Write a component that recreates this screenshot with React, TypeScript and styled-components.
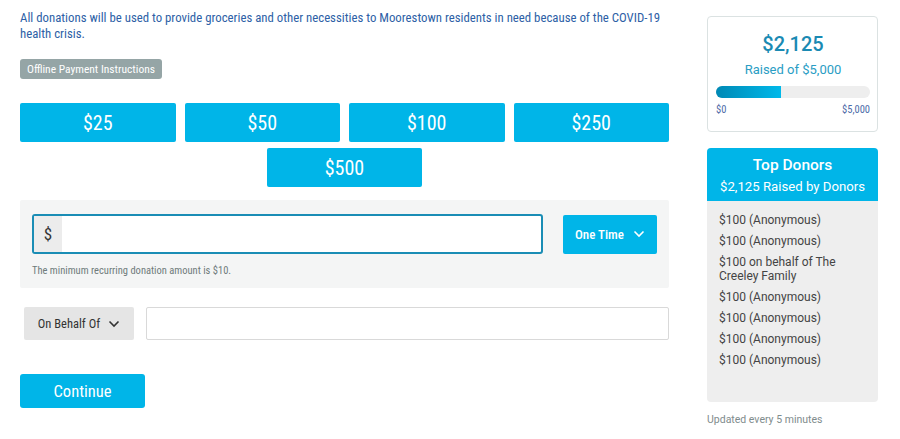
import styled, { createGlobalStyle } from "styled-components";

const GlobalStyle = createGlobalStyle`
  body {
    margin: 0;
    background: #ffffff;
    font-family: Roboto, "Noto Sans", sans-serif;
  }
  * { box-sizing: border-box; }
`;

const condensed = `"Roboto Condensed", "Liberation Sans Narrow", Roboto, sans-serif`;

const amounts = ["$25", "$50", "$100", "$250", "$500"];
const donors = [
  "$100 (Anonymous)",
  "$100 (Anonymous)",
  "$100 on behalf of The Creeley Family",
  "$100 (Anonymous)",
  "$100 (Anonymous)",
  "$100 (Anonymous)",
  "$100 (Anonymous)",
];

function Chevron({ color }: { color: string }) {
  return (
    <svg width="12" height="8" viewBox="0 0 12 8">
      <path d="M1.5 1.5 L6 6 L10.5 1.5" fill="none" stroke={color} strokeWidth="1.6" />
    </svg>
  );
}

export default function App() {
  const raised = 2125;
  const goal = 5000;

  return (
    <>
      <GlobalStyle />
      <Page>
        <Main>
          <Description>
            All donations will be used to provide groceries and other necessities to Moorestown
            residents in need because of the COVID-19 health crisis.
          </Description>
          <Badge>Offline Payment Instructions</Badge>
          <AmountGrid>
            {amounts.map((a) => (
              <AmountButton key={a}>{a}</AmountButton>
            ))}
          </AmountGrid>
          <CustomPanel>
            <CustomRow>
              <AmountInput>
                <Prefix>$</Prefix>
                <Field />
              </AmountInput>
              <FrequencyButton>
                One Time <Chevron color="#ffffff" />
              </FrequencyButton>
            </CustomRow>
            <Hint>The minimum recurring donation amount is $10.</Hint>
          </CustomPanel>
          <BehalfRow>
            <BehalfSelect>
              On Behalf Of <Chevron color="#333333" />
            </BehalfSelect>
            <BehalfInput />
          </BehalfRow>
          <ContinueButton>Continue</ContinueButton>
        </Main>

        <Side>
          <GoalCard>
            <Raised>$2,125</Raised>
            <RaisedOf>Raised of $5,000</RaisedOf>
            <Track>
              <Fill style={{ width: `${(raised / goal) * 100}%` }} />
            </Track>
            <TrackLabels>
              <span>$0</span>
              <span>$5,000</span>
            </TrackLabels>
          </GoalCard>

          <DonorsCard>
            <DonorsHeader>
              <h3>Top Donors</h3>
              <p>$2,125 Raised by Donors</p>
            </DonorsHeader>
            <DonorList>
              {donors.map((d, i) => (
                <li key={i}>{d}</li>
              ))}
            </DonorList>
          </DonorsCard>
          <Updated>Updated every 5 minutes</Updated>
        </Side>
      </Page>
    </>
  );
}

const Page = styled.div`
  display: flex;
  gap: 38px;
  padding: 10px 22px 0 20px;
  width: 900px;
`;

const Main = styled.div`
  width: 649px;
  font-family: ${condensed};
`;

const Description = styled.p`
  margin: 0;
  font-size: 12.8px;
  line-height: 16px;
  color: #2e5fa6;
`;

const Badge = styled.div`
  display: inline-block;
  margin-top: 17px;
  padding: 0 7px;
  height: 20px;
  line-height: 20px;
  border-radius: 3px;
  background: #95a5a6;
  color: #ffffff;
  font-size: 11.5px;
`;

const AmountGrid = styled.div`
  display: flex;
  flex-wrap: wrap;
  justify-content: center;
  gap: 6px 9px;
  margin-top: 24px;
`;

const AmountButton = styled.button`
  flex: 0 0 calc((100% - 27px) / 4);
  height: 39px;
  border: none;
  border-radius: 2px;
  background: #00b5e8;
  color: #ffffff;
  font-family: ${condensed};
  font-size: 20px;
  font-weight: 400;
`;

const CustomPanel = styled.div`
  margin-top: 13px;
  background: #f4f5f5;
  padding: 14px 12px 11px 12px;
  border-radius: 2px;
`;

const CustomRow = styled.div`
  display: flex;
  align-items: center;
  gap: 20px;
`;

const AmountInput = styled.div`
  flex: 1;
  display: flex;
  height: 40px;
  border: 2px solid #1a8db5;
  border-radius: 3px;
  background: #ffffff;
  overflow: hidden;
`;

const Prefix = styled.span`
  width: 28px;
  display: flex;
  align-items: center;
  justify-content: center;
  background: #ececec;
  color: #333333;
  font-size: 17px;
`;

const Field = styled.div`
  flex: 1;
`;

const FrequencyButton = styled.button`
  width: 94px;
  height: 39px;
  display: flex;
  align-items: center;
  justify-content: center;
  gap: 9px;
  border: none;
  border-radius: 2px;
  background: #00b5e8;
  color: #ffffff;
  font-family: ${condensed};
  font-size: 13px;
  font-weight: 500;
`;

const Hint = styled.div`
  margin-top: 10px;
  font-size: 10.5px;
  color: #6f7b7b;
`;

const BehalfRow = styled.div`
  display: flex;
  gap: 12px;
  margin-top: 19px;
  padding-left: 4px;
`;

const BehalfSelect = styled.div`
  width: 110px;
  height: 33px;
  display: flex;
  align-items: center;
  justify-content: center;
  gap: 8px;
  background: #e5e5e5;
  border-radius: 2px;
  color: #333333;
  font-size: 12.5px;
`;

const BehalfInput = styled.div`
  flex: 1;
  height: 33px;
  border: 1px solid #d9d9d9;
  border-radius: 2px;
`;

const ContinueButton = styled.button`
  margin-top: 34px;
  width: 125px;
  height: 34px;
  border: none;
  border-radius: 3px;
  background: #00b5e8;
  color: #ffffff;
  font-family: ${condensed};
  font-size: 16.5px;
  font-weight: 400;
`;

const Side = styled.div`
  width: 171px;
  padding-top: 6px;
`;

const GoalCard = styled.div`
  border: 1px solid #dbe2e2;
  border-radius: 4px;
  padding: 14px 7px 15px 8px;
  text-align: center;
`;

const Raised = styled.div`
  font-size: 20px;
  font-weight: 500;
  color: #1a8ab3;
  line-height: 26px;
`;

const RaisedOf = styled.div`
  margin-top: 5px;
  font-size: 13px;
  color: #2a9dc4;
  line-height: 16px;
`;

const Track = styled.div`
  margin-top: 8px;
  height: 12px;
  border-radius: 6px;
  background: #eeeeee;
  overflow: hidden;
`;

const Fill = styled.div`
  height: 100%;
  background: linear-gradient(to right, #0089b5, #00b9ea);
`;

const TrackLabels = styled.div`
  display: flex;
  justify-content: space-between;
  margin-top: 5px;
  font-family: ${condensed};
  font-size: 10.5px;
  color: #4d6ba8;
`;

const DonorsCard = styled.div`
  margin-top: 16px;
  border-radius: 4px;
  overflow: hidden;
  background: #eeeeee;
  height: 254px;
`;

const DonorsHeader = styled.div`
  background: #00b5e8;
  color: #ffffff;
  text-align: center;
  padding: 7px 0 5px 0;

  h3 {
    margin: 0;
    font-size: 15.5px;
    font-weight: 500;
    line-height: 20px;
  }

  p {
    margin: 3px 0 0;
    font-size: 13.2px;
    line-height: 18px;
  }
`;

const DonorList = styled.ul`
  list-style: none;
  margin: 0;
  padding: 12px 12px 0 12px;

  li {
    font-size: 12px;
    line-height: 14px;
    color: #444444;
    margin-bottom: 7px;
  }
`;

const Updated = styled.div`
  margin-top: 11px;
  font-size: 10.5px;
  color: #7f8c8d;
`;
